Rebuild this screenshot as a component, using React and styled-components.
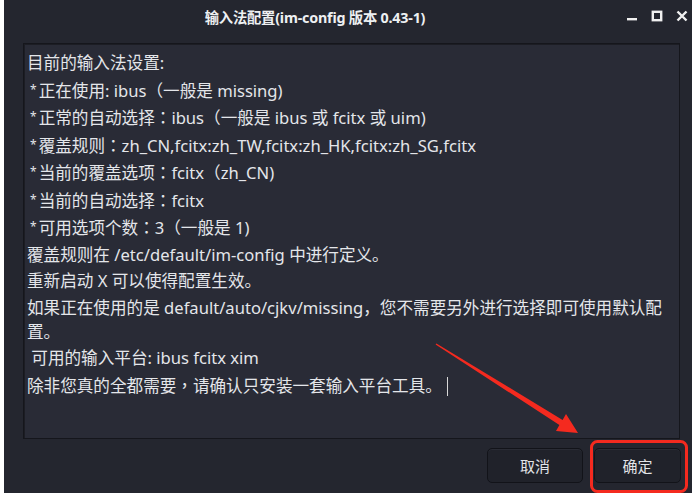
import React from "react";
import styled, { createGlobalStyle } from "styled-components";

const Global = createGlobalStyle`
  html, body { margin: 0; padding: 0; background: #ffffff; }
  body { font-family: "Noto Sans", "Noto Sans CJK SC", sans-serif; }
`;

const Page = styled.div`
  position: relative;
  width: 694px;
  height: 498px;
  background: #ffffff;
`;

const Window = styled.div`
  margin-left: 4px;
  width: 688px;
  height: 493px;
  background: #24262f;
  display: flex;
  flex-direction: column;
  box-sizing: border-box;
`;

const TitleBar = styled.div`
  height: 34px;
  flex: none;
  display: flex;
  align-items: center;
`;

const Title = styled.div`
  flex: 1;
  text-align: center;
  color: #eef0f2;
  font-family: "Noto Sans", "Noto Sans CJK SC", sans-serif;
  font-weight: 700;
  font-size: 14.3px;
  letter-spacing: -0.2px;
  padding-bottom: 2px;
`;

const Controls = styled.div`
  flex: none;
  display: flex;
  align-items: center;
  gap: 13px;
  padding-right: 4px;
  padding-bottom: 2px;
`;

const TextArea = styled.div`
  flex: none;
  margin: 9px 12px 0 19px;
  height: 396px;
  box-sizing: border-box;
  background: #292b36;
  border: 1px solid #15161c;
  box-shadow: inset 1px 1px 0 #1c1d24;
  padding: 7px 2px 0 3px;
  color: #e4e6ea;
  font-family: "Noto Sans", "Noto Sans CJK SC", sans-serif;
  font-size: 16.6px;
  overflow: hidden;
`;

const Line = styled.div`
  line-height: 24px;
  margin-bottom: 2.5px;
  white-space: pre-wrap;
  padding-left: ${(p) => (p.$bullet ? "3px" : "0")};
`;

const Star = styled.span`
  display: inline-block;
  font-size: 12px;
  vertical-align: 3px;
  margin-right: 2px;
`;

const Punct = styled.span`
  font-family: "Noto Sans CJK TC", sans-serif;
`;

const Caret = styled.span`
  display: inline-block;
  width: 1px;
  height: 19px;
  background: #d8d8d8;
  vertical-align: -4px;
  margin-left: 5px;
`;

const ButtonRow = styled.div`
  flex: none;
  display: flex;
  justify-content: flex-end;
  gap: 11px;
  margin: 9px 11px 0 0;
`;

const Button = styled.button`
  width: ${(p) => p.$w}px;
  height: 35px;
  box-sizing: border-box;
  background: #20222a;
  border: 1px solid #121319;
  border-radius: 5px;
  color: #e2e4e8;
  font-family: "Noto Sans CJK SC", "Noto Sans", sans-serif;
  font-size: 15px;
  padding: 0;
  box-shadow: inset 0 1px 0 #2a2c35;
`;

const Overlay = styled.svg`
  position: absolute;
  left: 0;
  top: 0;
  pointer-events: none;
`;

function Minimize() {
  return (
    <svg width="12" height="12" viewBox="0 0 12 12">
      <rect x="1" y="8" width="10" height="2.4" fill="#f0f0f0" />
    </svg>
  );
}
function Maximize() {
  return (
    <svg width="12" height="12" viewBox="0 0 12 12">
      <rect x="1.8" y="1.8" width="8.4" height="8.4" fill="none" stroke="#f0f0f0" strokeWidth="2.4" />
    </svg>
  );
}
function Close() {
  return (
    <svg width="12" height="12" viewBox="0 0 12 12">
      <path d="M1.5 1.5 L10.5 10.5 M10.5 1.5 L1.5 10.5" stroke="#f0f0f0" strokeWidth="2.4" />
    </svg>
  );
}

function withPunct(text) {
  return text.split(/([：，])/).map((part, i) =>
    part === "：" || part === "，" ? <Punct key={i}>{part}</Punct> : part
  );
}

const lines = [
  { t: "目前的输入法设置:" },
  { t: "正在使用: ibus（一般是 missing)", b: true },
  { t: "正常的自动选择：ibus（一般是 ibus 或 fcitx 或 uim)", b: true },
  { t: "覆盖规则：zh_CN,fcitx:zh_TW,fcitx:zh_HK,fcitx:zh_SG,fcitx", b: true },
  { t: "当前的覆盖选项：fcitx（zh_CN)", b: true },
  { t: "当前的自动选择：fcitx", b: true },
  { t: "可用选项个数：3（一般是 1)", b: true },
  { t: "覆盖规则在 /etc/default/im-config 中进行定义。" },
  { t: "重新启动 X 可以使得配置生效。" },
  { t: "如果正在使用的是 default/auto/cjkv/missing，您不需要另外进行选择即可使用默认配置。", plain: true },
  { t: " 可用的输入平台: ibus fcitx xim" },
];

export default function App() {
  return (
    <Page>
      <Global />
      <Window>
        <TitleBar>
          <Title>输入法配置(im-config 版本 0.43-1)</Title>
          <Controls>
            <Minimize />
            <Maximize />
            <Close />
          </Controls>
        </TitleBar>
        <TextArea>
          {lines.map((l, i) => (
            <Line key={i} $bullet={l.b}>
              {l.b && <Star>*</Star>}
              {l.plain ? l.t : withPunct(l.t)}
            </Line>
          ))}
          <Line>
            {withPunct("除非您真的全都需要，请确认只安装一套输入平台工具。")}
            <Caret />
          </Line>
        </TextArea>
        <ButtonRow>
          <Button $w={96}>取消</Button>
          <Button $w={87}>确定</Button>
        </ButtonRow>
      </Window>
      <Overlay width="694" height="498" viewBox="0 0 694 498">
        <polygon
          points="436.4,343.4 562.6,420 566,414 578,433 556,431 559.4,425 435.6,344.6"
          fill="#f42a1f"
        />
        <rect x="591.5" y="441.5" width="95" height="50" rx="6" fill="none" stroke="#f42a1f" strokeWidth="3" />
      </Overlay>
    </Page>
  );
}
